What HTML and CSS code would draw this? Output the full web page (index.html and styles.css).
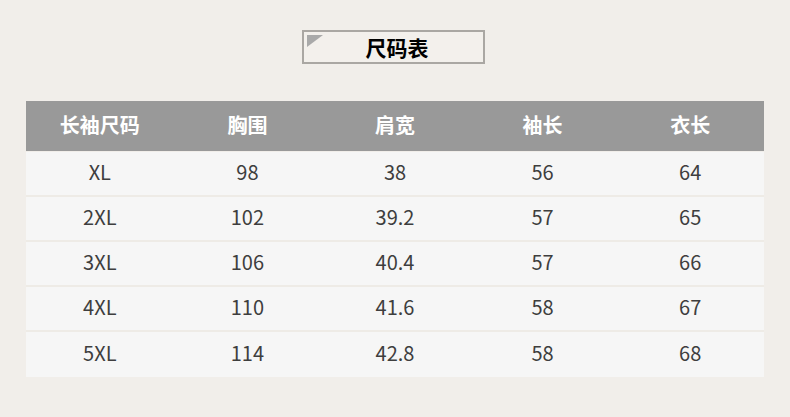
FILE: index.html
```html
<!DOCTYPE html>
<html lang="zh">
<head>
<meta charset="utf-8">
<link rel="stylesheet" href="styles.css">
</head>
<body>
<div class="page">
  <div class="title-wrap">
    <div class="title-box">
      <span class="corner"></span>
      <span class="title">尺码表</span>
    </div>
  </div>
  <div class="table">
    <div class="row head">
      <div>长袖尺码</div><div>胸围</div><div>肩宽</div><div>袖长</div><div>衣长</div>
    </div>
    <div class="row"><div>XL</div><div>98</div><div>38</div><div>56</div><div>64</div></div>
    <div class="row"><div>2XL</div><div>102</div><div>39.2</div><div>57</div><div>65</div></div>
    <div class="row"><div>3XL</div><div>106</div><div>40.4</div><div>57</div><div>66</div></div>
    <div class="row"><div>4XL</div><div>110</div><div>41.6</div><div>58</div><div>67</div></div>
    <div class="row last"><div>5XL</div><div>114</div><div>42.8</div><div>58</div><div>68</div></div>
  </div>
</div>
</body>
</html>
```
FILE: styles.css
```css
html, body {
  margin: 0;
  padding: 0;
  background: #f1eeea;
}
body {
  width: 790px;
  height: 417px;
  overflow: hidden;
  font-family: "Noto Sans CJK SC", "Noto Sans", sans-serif;
}
.page {
  padding-top: 30px;
}
.title-wrap {
  display: flex;
  padding-left: 302px;
}
.title-box {
  position: relative;
  box-sizing: border-box;
  width: 183px;
  height: 34px;
  border: 2px solid #aaa7a3;
  background: #f3f0ec;
  display: flex;
  align-items: center;
  justify-content: center;
}
.corner {
  position: absolute;
  left: 3px;
  top: 3px;
  width: 0;
  height: 0;
  border-top: 12px solid #a9a9a9;
  border-right: 16px solid transparent;
}
.title {
  font-size: 21px;
  font-weight: 700;
  color: #000;
  line-height: 1;
  padding-left: 7px;
}
.table {
  margin: 37px 0 0 26px;
  width: 738px;
}
.row {
  display: grid;
  grid-template-columns: repeat(5, 1fr);
  box-sizing: border-box;
  height: 43px;
  padding-bottom: 3px;
  background: #f6f6f6;
  border-bottom: 2px solid #eeebe6;
  align-items: center;
  text-align: center;
  font-size: 20px;
  color: #3e3e3e;
  line-height: 1;
}
.row {
  height: 45px;
}
.row.last {
  border-bottom: 0;
}
.row.head {
  height: 50px;
  padding-bottom: 2px;
  background: #999999;
  border-bottom: 0;
  color: #fff;
  font-weight: 700;
  font-size: 20px;
  margin-bottom: 1px;
}
```
